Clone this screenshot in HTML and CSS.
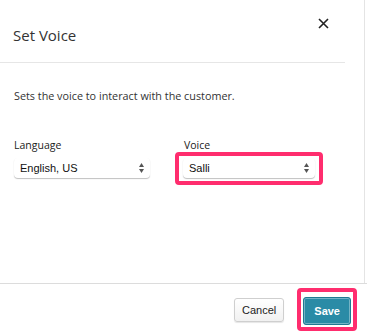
FILE: index.html
```html
<!DOCTYPE html>
<html lang="en">
<head>
    <meta charset="UTF-8">
    <title>Set Voice</title>
    <link rel="stylesheet" href="styles.css">
</head>
<body>
    <div class="modal">
        <div class="modal-main">
            <div class="modal-header">
                <h2>Set Voice</h2>
                <button class="close-btn" aria-label="Close">
                    <svg width="11" height="11" viewBox="0 0 11 11">
                        <path d="M1 1 L10 10 M10 1 L1 10" stroke="#222" stroke-width="1.6" />
                    </svg>
                </button>
            </div>

            <div class="modal-body">
                <p class="description">Sets the voice to interact with the customer.</p>

                <div class="fields">
                    <div class="field field-language">
                        <label>Language</label>
                        <div class="select">
                            <span>English, US</span>
                            <svg class="arrows" width="5" height="10" viewBox="0 0 5 10">
                                <path d="M2.5 0 L5 4 L0 4 Z M0 6 L5 6 L2.5 10 Z" fill="#555" />
                            </svg>
                        </div>
                    </div>
                    <div class="field field-voice">
                        <label>Voice</label>
                        <div class="highlight">
                            <div class="select">
                                <span>Salli</span>
                                <svg class="arrows" width="5" height="10" viewBox="0 0 5 10">
                                    <path d="M2.5 0 L5 4 L0 4 Z M0 6 L5 6 L2.5 10 Z" fill="#555" />
                                </svg>
                            </div>
                        </div>
                    </div>
                </div>
            </div>
        </div>

        <div class="modal-footer">
            <button class="btn btn-cancel">Cancel</button>
            <div class="highlight save-highlight">
                <button class="btn btn-save">Save</button>
            </div>
        </div>
    </div>
</body>
</html>
```

FILE: styles.css
```css
/* Reset styles */
* {
    margin: 0;
    padding: 0;
    box-sizing: border-box;
}

body {
    font-family: 'Open Sans', 'Liberation Sans', sans-serif;
    background-color: #ffffff;
    color: #333;
    width: 367px;
    height: 335px;
    overflow: hidden;
}

.modal {
    display: flex;
    flex-direction: column;
    height: 335px;
}

/* Main area with the scrollbar track on the right */
.modal-main {
    flex: 1;
    display: flex;
    flex-direction: column;
    margin-right: 2px;
    border-right: 1px solid #e4e4e4;
}

.modal-header {
    display: flex;
    justify-content: space-between;
    align-items: flex-start;
    height: 63px;
    margin-right: 19px;
    border-bottom: 1px solid #e6e6e6;
    padding: 0 0 0 13px;
}

.modal-header h2 {
    font-size: 15px;
    font-weight: normal;
    color: #333;
    margin-top: 25px;
}

.close-btn {
    background: none;
    border: none;
    margin-top: 17px;
    margin-right: 16px;
    cursor: pointer;
}

.modal-body {
    padding: 25px 14px 0 14px;
}

.description {
    font-size: 10.8px;
    color: #333;
}

.fields {
    display: flex;
    align-items: flex-start;
    margin-top: 36px;
}

.field {
    display: flex;
    flex-direction: column;
}

.field label {
    font-size: 10.5px;
    line-height: 13px;
    color: #222;
}

.field-language {
    width: 161px;
}

.field-language label {
    margin-bottom: 6px;
}

.field-voice label {
    margin-left: 9px;
}

.select {
    display: flex;
    justify-content: space-between;
    align-items: center;
    width: 136px;
    height: 20px;
    padding: 0 6px;
    font-family: 'Liberation Sans', Arial, sans-serif;
    font-size: 11px;
    color: #111;
    background: #fff;
    border-radius: 4px;
    box-shadow: 0 1px 1px rgba(0, 0, 0, 0.25);
}

.highlight {
    border: 4px solid #ff2d6e;
    border-radius: 4px;
    padding: 2px 4px 3px 4px;
    background: #fff;
}

.highlight .select {
    width: 132px;
}

/* Footer */
.modal-footer {
    display: flex;
    justify-content: flex-end;
    align-items: center;
    height: 52px;
    border-top: 1px solid #dcdcdc;
    padding-right: 10px;
    gap: 13px;
}

.btn {
    font-family: 'Liberation Sans', Arial, sans-serif;
    font-size: 11px;
    border-radius: 3px;
    cursor: pointer;
}

.btn-cancel {
    height: 24px;
    padding: 0 7px;
    color: #222;
    background: linear-gradient(#ffffff, #f1f1f1);
    border: 1px solid #cfcfcf;
    box-shadow: 0 1px 1px rgba(0, 0, 0, 0.1);
}

.save-highlight {
    padding: 5px 2px 2px 2px;
}

.btn-save {
    height: 28px;
    padding: 0 10px;
    color: #fff;
    font-weight: bold;
    background: #2a8ba6;
    border: 1px solid #1f7892;
    box-shadow: inset 0 0 0 1px rgba(255, 255, 255, 0.35);
}
```
